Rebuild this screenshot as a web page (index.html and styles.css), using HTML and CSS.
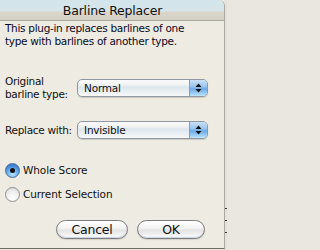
FILE: index.html
```html
<!DOCTYPE html>
<html>
<head>
<meta charset="utf-8">
<link rel="stylesheet" href="styles.css">
</head>
<body>
<div class="screen">
  <div class="window">
    <div class="titlebar">Barline Replacer</div>
    <div class="content">
      <p class="desc">This plug-in replaces barlines of one<br>type with barlines of another type.</p>
      <div class="row row-first">
        <div class="label">Original<br>barline type:</div>
        <div class="popup"><span class="popup-text">Normal</span><span class="popup-arrows"><svg width="7" height="10" viewBox="0 0 7 10"><path d="M3.5 0.5 L6.5 4 L0.5 4 Z M0.5 6 L6.5 6 L3.5 9.5 Z" fill="#111"/></svg></span></div>
      </div>
      <div class="row row-second">
        <div class="label">Replace with:</div>
        <div class="popup"><span class="popup-text">Invisible</span><span class="popup-arrows"><svg width="7" height="10" viewBox="0 0 7 10"><path d="M3.5 0.5 L6.5 4 L0.5 4 Z M0.5 6 L6.5 6 L3.5 9.5 Z" fill="#111"/></svg></span></div>
      </div>
      <div class="radio-row radio-first"><span class="radio on"><span class="dot"></span></span><span class="radio-label">Whole Score</span></div>
      <div class="radio-row radio-second"><span class="radio"></span><span class="radio-label">Current Selection</span></div>
      <div class="buttons">
        <div class="button cancel">Cancel</div>
        <div class="button ok">OK</div>
      </div>
    </div>
  </div>
  <div class="strip"><span class="tick"></span><span class="tick"></span><span class="tick"></span></div>
</div>
</body>
</html>
```
FILE: styles.css
```css
* { box-sizing: border-box; }
html, body { margin: 0; padding: 0; background: #e9e7e0; }
body {
  width: 227px;
  height: 250px;
  overflow: hidden;
  font-family: "DejaVu Sans", "Liberation Sans", sans-serif;
  color: #111;
}
.screen {
  display: flex;
  width: 227px;
  height: 250px;
}
.window {
  width: 225px;
  flex: none;
  height: 249px;
  background: #eeebe2;
  border-right: 1px solid #a9a8a2;
  border-bottom: 1px solid #6c6b66;
  border-top-right-radius: 6px;
  display: flex;
  flex-direction: column;
}
.titlebar {
  height: 21px;
  flex: none;
  border-top-right-radius: 6px;
  background: linear-gradient(to bottom, #d3e5eb 0, #d6e5ea 11px, #d9d6cb 12px, #d6d2c6 20px);
  border-bottom: 1px solid #a9a69d;
  text-align: center;
  font-size: 12.5px;
  line-height: 21px;
  letter-spacing: -0.2px;
  padding-left: 1px;
}
.content {
  display: flex;
  flex-direction: column;
  padding: 1px 0 0 5px;
}
.desc {
  margin: 0;
  font-size: 10.5px;
  line-height: 13px;
  letter-spacing: -0.3px;
  color: #0a0a28;
}
.row {
  display: flex;
  align-items: center;
  height: 26px;
}
.row-first { margin-top: 27px; }
.row-second { margin-top: 20px; height: 18px; }
.label {
  width: 72px;
  flex: none;
  font-size: 10.5px;
  line-height: 13px;
  letter-spacing: -0.3px;
}
.popup {
  width: 131px;
  height: 18px;
  display: flex;
  border: 1px solid #8e98a4;
  border-radius: 5px;
  overflow: hidden;
  background: linear-gradient(to bottom, #fbfbfb 0, #f1f2f3 30%, #dbe6ee 45%, #e4ecf1 60%, #f8f8f8 100%);
  box-shadow: 0 1px 1px rgba(0,0,0,0.15);
}
.popup-text {
  flex: 1;
  font-size: 10.5px;
  line-height: 16px;
  padding-left: 6px;
  letter-spacing: -0.2px;
}
.popup-arrows {
  width: 18px;
  display: flex;
  align-items: center;
  justify-content: center;
  border-left: 1px solid #7e9cc0;
  background: linear-gradient(to bottom, #c9e0f6 0, #9cc6ee 40%, #6faae5 55%, #9ed0f7 85%, #c3e6fb 100%);
}
.radio-row {
  display: flex;
  align-items: center;
  height: 16px;
}
.radio-first { margin-top: 23px; }
.radio-second { margin-top: 8px; }
.radio {
  width: 15px;
  height: 15px;
  border-radius: 50%;
  border: 1px solid #8f8f8f;
  background: radial-gradient(circle at 50% 75%, #ffffff 0, #f2f2f2 45%, #d6d6d6 100%);
  display: flex;
  align-items: center;
  justify-content: center;
  margin-right: 3px;
  flex: none;
}
.radio.on {
  border-color: #4a6e9a;
  background: radial-gradient(circle at 50% 80%, #b7e3ff 0, #6fb3ee 40%, #3d7fcf 75%, #4a86cf 100%);
}
.dot {
  width: 5px;
  height: 5px;
  border-radius: 50%;
  background: #111;
}
.radio-label {
  font-size: 10.5px;
  letter-spacing: -0.1px;
}
.buttons {
  display: flex;
  justify-content: flex-end;
  gap: 9px;
  margin-top: 18px;
  padding-right: 19px;
}
.button {
  height: 19px;
  border: 1px solid #7d7d7d;
  border-radius: 10px;
  background: linear-gradient(to bottom, #ffffff 0, #f4f4f4 40%, #e4e4e4 55%, #f1f1f1 80%, #ffffff 100%);
  box-shadow: inset 0 -1px 1px rgba(150,170,200,0.5), 0 1px 1px rgba(0,0,0,0.12);
  text-align: center;
  font-size: 12.5px;
  line-height: 17px;
  letter-spacing: -0.2px;
}
.cancel { width: 72px; }
.ok { width: 68px; }
.strip {
  width: 2px;
  flex: none;
  display: flex;
  flex-direction: column;
  background: #e4e2da;
  padding-top: 208px;
}
.tick {
  height: 1px;
  background: #333;
  margin-bottom: 11px;
}
```
